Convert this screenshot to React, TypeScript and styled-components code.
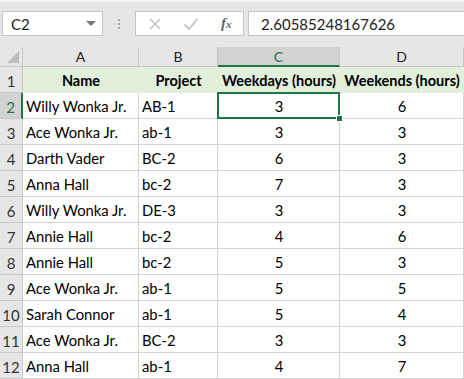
import React from "react";
import styled, { createGlobalStyle } from "styled-components";

const GlobalStyle = createGlobalStyle`
  html, body {
    margin: 0;
    padding: 0;
    background: #ffffff;
  }
  body {
    font-family: "Lato", "Open Sans", sans-serif;
    overflow: hidden;
  }
`;

const columns = ["A", "B", "C", "D"];
const headers = ["Name", "Project", "Weekdays (hours)", "Weekends (hours)"];

const rows: [string, string, number, number][] = [
  ["Willy Wonka Jr.", "AB-1", 3, 6],
  ["Ace Wonka Jr.", "ab-1", 3, 3],
  ["Darth Vader", "BC-2", 6, 3],
  ["Anna Hall", "bc-2", 7, 3],
  ["Willy Wonka Jr.", "DE-3", 3, 3],
  ["Annie Hall", "bc-2", 4, 6],
  ["Annie Hall", "bc-2", 5, 3],
  ["Ace Wonka Jr.", "ab-1", 5, 5],
  ["Sarah Connor", "ab-1", 5, 4],
  ["Ace Wonka Jr.", "BC-2", 3, 3],
  ["Anna Hall", "ab-1", 4, 7],
];

const App = () => {
  return (
    <>
      <GlobalStyle />
      <Window>
        <FormulaBar>
          <NameBox>
            <NameText>C2</NameText>
            <DropArrow />
          </NameBox>
          <Grip>
            <span />
            <span />
            <span />
          </Grip>
          <ActionBox>
            <svg width="14" height="14" viewBox="0 0 14 14">
              <path d="M2 2 L12 12 M12 2 L2 12" stroke="#c3c3c3" strokeWidth="1.6" fill="none" />
            </svg>
            <svg width="16" height="14" viewBox="0 0 16 14">
              <path d="M1.5 7.5 L6 12 L14.5 2" stroke="#c3c3c3" strokeWidth="1.8" fill="none" />
            </svg>
            <FxLabel>
              f<sub>x</sub>
            </FxLabel>
          </ActionBox>
          <ValueBox>2.60585248167626</ValueBox>
        </FormulaBar>

        <Sheet>
          <Corner>
            <CornerTriangle />
          </Corner>
          {columns.map((c) => (
            <ColHead key={c} $active={c === "C"}>
              {c}
            </ColHead>
          ))}

          <RowHead>1</RowHead>
          {headers.map((h) => (
            <TitleCell key={h}>{h}</TitleCell>
          ))}

          {rows.map((r, i) => (
            <React.Fragment key={i}>
              <RowHead $active={i === 0}>{i + 2}</RowHead>
              <Cell>{r[0]}</Cell>
              <Cell>{r[1]}</Cell>
              <Cell $center $selected={i === 0}>
                {r[2]}
              </Cell>
              <Cell $center>{r[3]}</Cell>
            </React.Fragment>
          ))}
        </Sheet>
      </Window>
    </>
  );
};

export default App;

const Window = styled.div`
  width: 464px;
  height: 379px;
  overflow: hidden;
  background: #ffffff;
`;

const FormulaBar = styled.div`
  height: 47px;
  box-sizing: border-box;
  background: #e6e6e6;
  border-top: 2px solid #f2f2f2;
  padding: 9px 0 0 2px;
  display: flex;
  align-items: flex-start;
`;

const NameBox = styled.div`
  width: 101px;
  height: 25px;
  box-sizing: border-box;
  background: #ffffff;
  border: 1px solid #c6c6c6;
  display: flex;
  align-items: center;
  justify-content: space-between;
  padding: 0 6px 0 8px;
`;

const NameText = styled.span`
  font-size: 15px;
  color: #222;
`;

const DropArrow = styled.span`
  width: 0;
  height: 0;
  border-left: 5px solid transparent;
  border-right: 5px solid transparent;
  border-top: 5px solid #777;
  margin-top: -1px;
`;

const Grip = styled.div`
  width: 32px;
  height: 25px;
  display: flex;
  flex-direction: column;
  align-items: center;
  justify-content: center;
  gap: 2px;

  span {
    width: 2px;
    height: 2px;
    background: #a6a6a6;
  }
`;

const ActionBox = styled.div`
  width: 109px;
  height: 25px;
  box-sizing: border-box;
  background: #ffffff;
  border: 1px solid #c6c6c6;
  display: flex;
  align-items: center;
  padding: 0 8px 0 12px;
  gap: 21px;
`;

const FxLabel = styled.span`
  font-family: "Liberation Serif", "DejaVu Serif", serif;
  font-style: italic;
  font-weight: 700;
  font-size: 15px;
  color: #666;
  margin-left: 1px;

  sub {
    font-size: 11px;
    vertical-align: 0;
  }
`;

const ValueBox = styled.div`
  flex: 1;
  height: 25px;
  box-sizing: border-box;
  margin-left: 4px;
  background: #ffffff;
  border: 1px solid #c6c6c6;
  border-right: none;
  font-size: 15px;
  color: #222;
  display: flex;
  align-items: center;
  padding-left: 12px;
`;

const Sheet = styled.div`
  display: grid;
  grid-template-columns: 23px 116px 79px 122px 124px;
  grid-template-rows: 20px repeat(12, 26px);
`;

const Corner = styled.div`
  background: #e6e6e6;
  border-right: 1px solid #c8c8c8;
  border-bottom: 1px solid #c8c8c8;
  box-sizing: border-box;
  display: flex;
  align-items: flex-end;
  justify-content: flex-end;
  padding: 0 3px 3px 0;
`;

const CornerTriangle = styled.span`
  width: 0;
  height: 0;
  border-left: 12px solid transparent;
  border-bottom: 12px solid #bdbdbd;
`;

const ColHead = styled.div<{ $active?: boolean }>`
  box-sizing: border-box;
  background: ${(p) => (p.$active ? "#d2d2d2" : "#e6e6e6")};
  border-right: 1px solid #c8c8c8;
  border-bottom: ${(p) => (p.$active ? "2px solid #217346" : "1px solid #c8c8c8")};
  color: ${(p) => (p.$active ? "#217346" : "#222")};
  font-size: 14px;
  display: flex;
  align-items: center;
  justify-content: center;
`;

const RowHead = styled.div<{ $active?: boolean }>`
  box-sizing: border-box;
  background: ${(p) => (p.$active ? "#d2d2d2" : "#e6e6e6")};
  border-right: ${(p) => (p.$active ? "2px solid #217346" : "1px solid #c8c8c8")};
  border-bottom: 1px solid #c8c8c8;
  color: ${(p) => (p.$active ? "#217346" : "#333")};
  font-size: 15px;
  display: flex;
  align-items: flex-end;
  justify-content: center;
  padding-bottom: 2px;
`;

const TitleCell = styled.div`
  box-sizing: border-box;
  background: #e2efda;
  border-bottom: 1px solid #e2efda;
  font-size: 14.5px;
  font-weight: 700;
  color: #000;
  white-space: nowrap;
  display: flex;
  align-items: flex-end;
  justify-content: center;
  padding-bottom: 3px;
`;

const Cell = styled.div<{ $center?: boolean; $selected?: boolean }>`
  position: relative;
  box-sizing: border-box;
  border-right: 1px solid #d4d4d4;
  border-bottom: 1px solid #d4d4d4;
  font-size: 14.8px;
  color: #000;
  white-space: nowrap;
  display: flex;
  align-items: flex-end;
  justify-content: ${(p) => (p.$center ? "center" : "flex-start")};
  padding: 0 2px 3px 3px;

  ${(p) =>
    p.$selected &&
    `
    &::after {
      content: "";
      position: absolute;
      left: -1px;
      top: -1px;
      right: -1px;
      bottom: -1px;
      border: 2px solid #217346;
      pointer-events: none;
    }
    &::before {
      content: "";
      position: absolute;
      right: -4px;
      bottom: -4px;
      width: 5px;
      height: 5px;
      background: #217346;
      border: 1px solid #fff;
      z-index: 2;
    }
  `}
`;
